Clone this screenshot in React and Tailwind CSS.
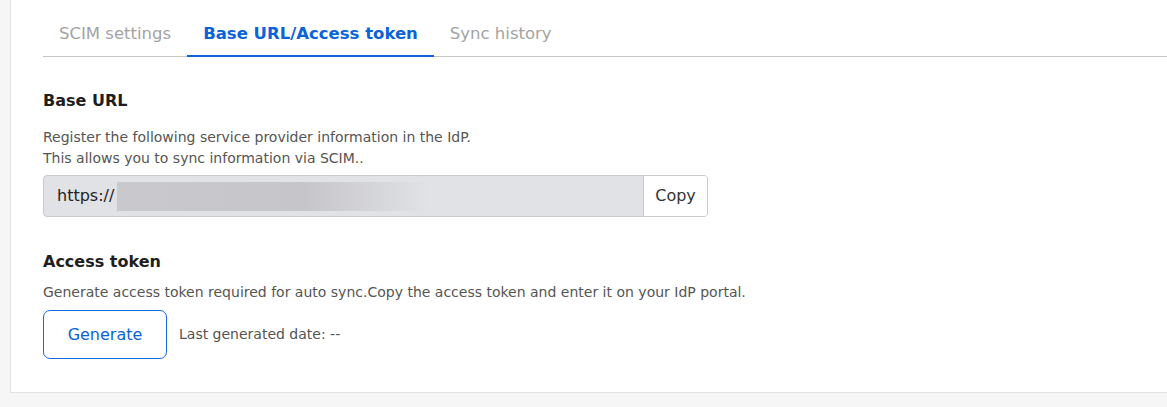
import React, { useState } from 'react';

const tabs = ['SCIM settings', 'Base URL/Access token', 'Sync history'];

export default function App() {
  const [active, setActive] = useState(1);

  return (
    <div className="min-h-[407px] bg-[#f6f6f6] pl-[10px] font-['DejaVu_Sans',sans-serif]">
      <div className="h-[393px] bg-white border-l border-b border-[#e2e2e2] pl-[32px] pb-[33px]">
        {/* Tabs */}
        <div className="flex pt-[22px] border-b border-[#c6c6c6]">
          {tabs.map((t, i) => (
            <button
              key={t}
              onClick={() => setActive(i)}
              className={
                'px-[16px] pb-[9px] text-[16.5px] leading-[24px] -mb-px border-b-2 ' +
                (i === active
                  ? 'font-bold text-[#0b63d9] border-[#0b63d9]'
                  : 'text-[#a3a3a3] border-transparent')
              }
            >
              {t}
            </button>
          ))}
        </div>

        {/* Base URL */}
        <div className="mt-[32px]">
          <h3 className="text-[16px] leading-[24px] font-bold text-[#1e1e1e]">Base URL</h3>
          <p className="mt-[14px] text-[14px] leading-[21px] text-[#555]">
            Register the following service provider information in the IdP.
            <br />
            This allows you to sync information via SCIM..
          </p>
          <div className="mt-[6px] w-[665px] h-[42px] flex rounded-[4px] border border-[#c9cacd] bg-[#e1e2e6] overflow-hidden">
            <div className="flex-1 flex items-center pl-[13px] text-[16px] text-[#222]">
              <span>https://</span>
              <span className="ml-[3px] h-[29px] w-[312px] bg-[linear-gradient(90deg,#c9c9cd_0%,#c6c6ca_60%,#e1e2e6_100%)]" />
            </div>
            <button className="w-[64px] bg-white border-l border-[#c9cacd] text-[16px] text-[#333]">Copy</button>
          </div>
        </div>

        {/* Access token */}
        <div className="mt-[33px]">
          <h3 className="text-[16px] leading-[24px] font-bold text-[#1e1e1e]">Access token</h3>
          <p className="mt-[8px] text-[14px] leading-[21px] text-[#555]">
            Generate access token required for auto sync.Copy the access token and enter it on your IdP portal.
          </p>
          <div className="mt-[7px] flex items-center gap-[12px]">
            <button className="w-[124px] h-[49px] rounded-[7px] border border-[#1769df] text-[16px] text-[#0b63d9] bg-white">
              Generate
            </button>
            <span className="text-[14px] text-[#555]">Last generated date: --</span>
          </div>
        </div>
      </div>
    </div>
  );
}
